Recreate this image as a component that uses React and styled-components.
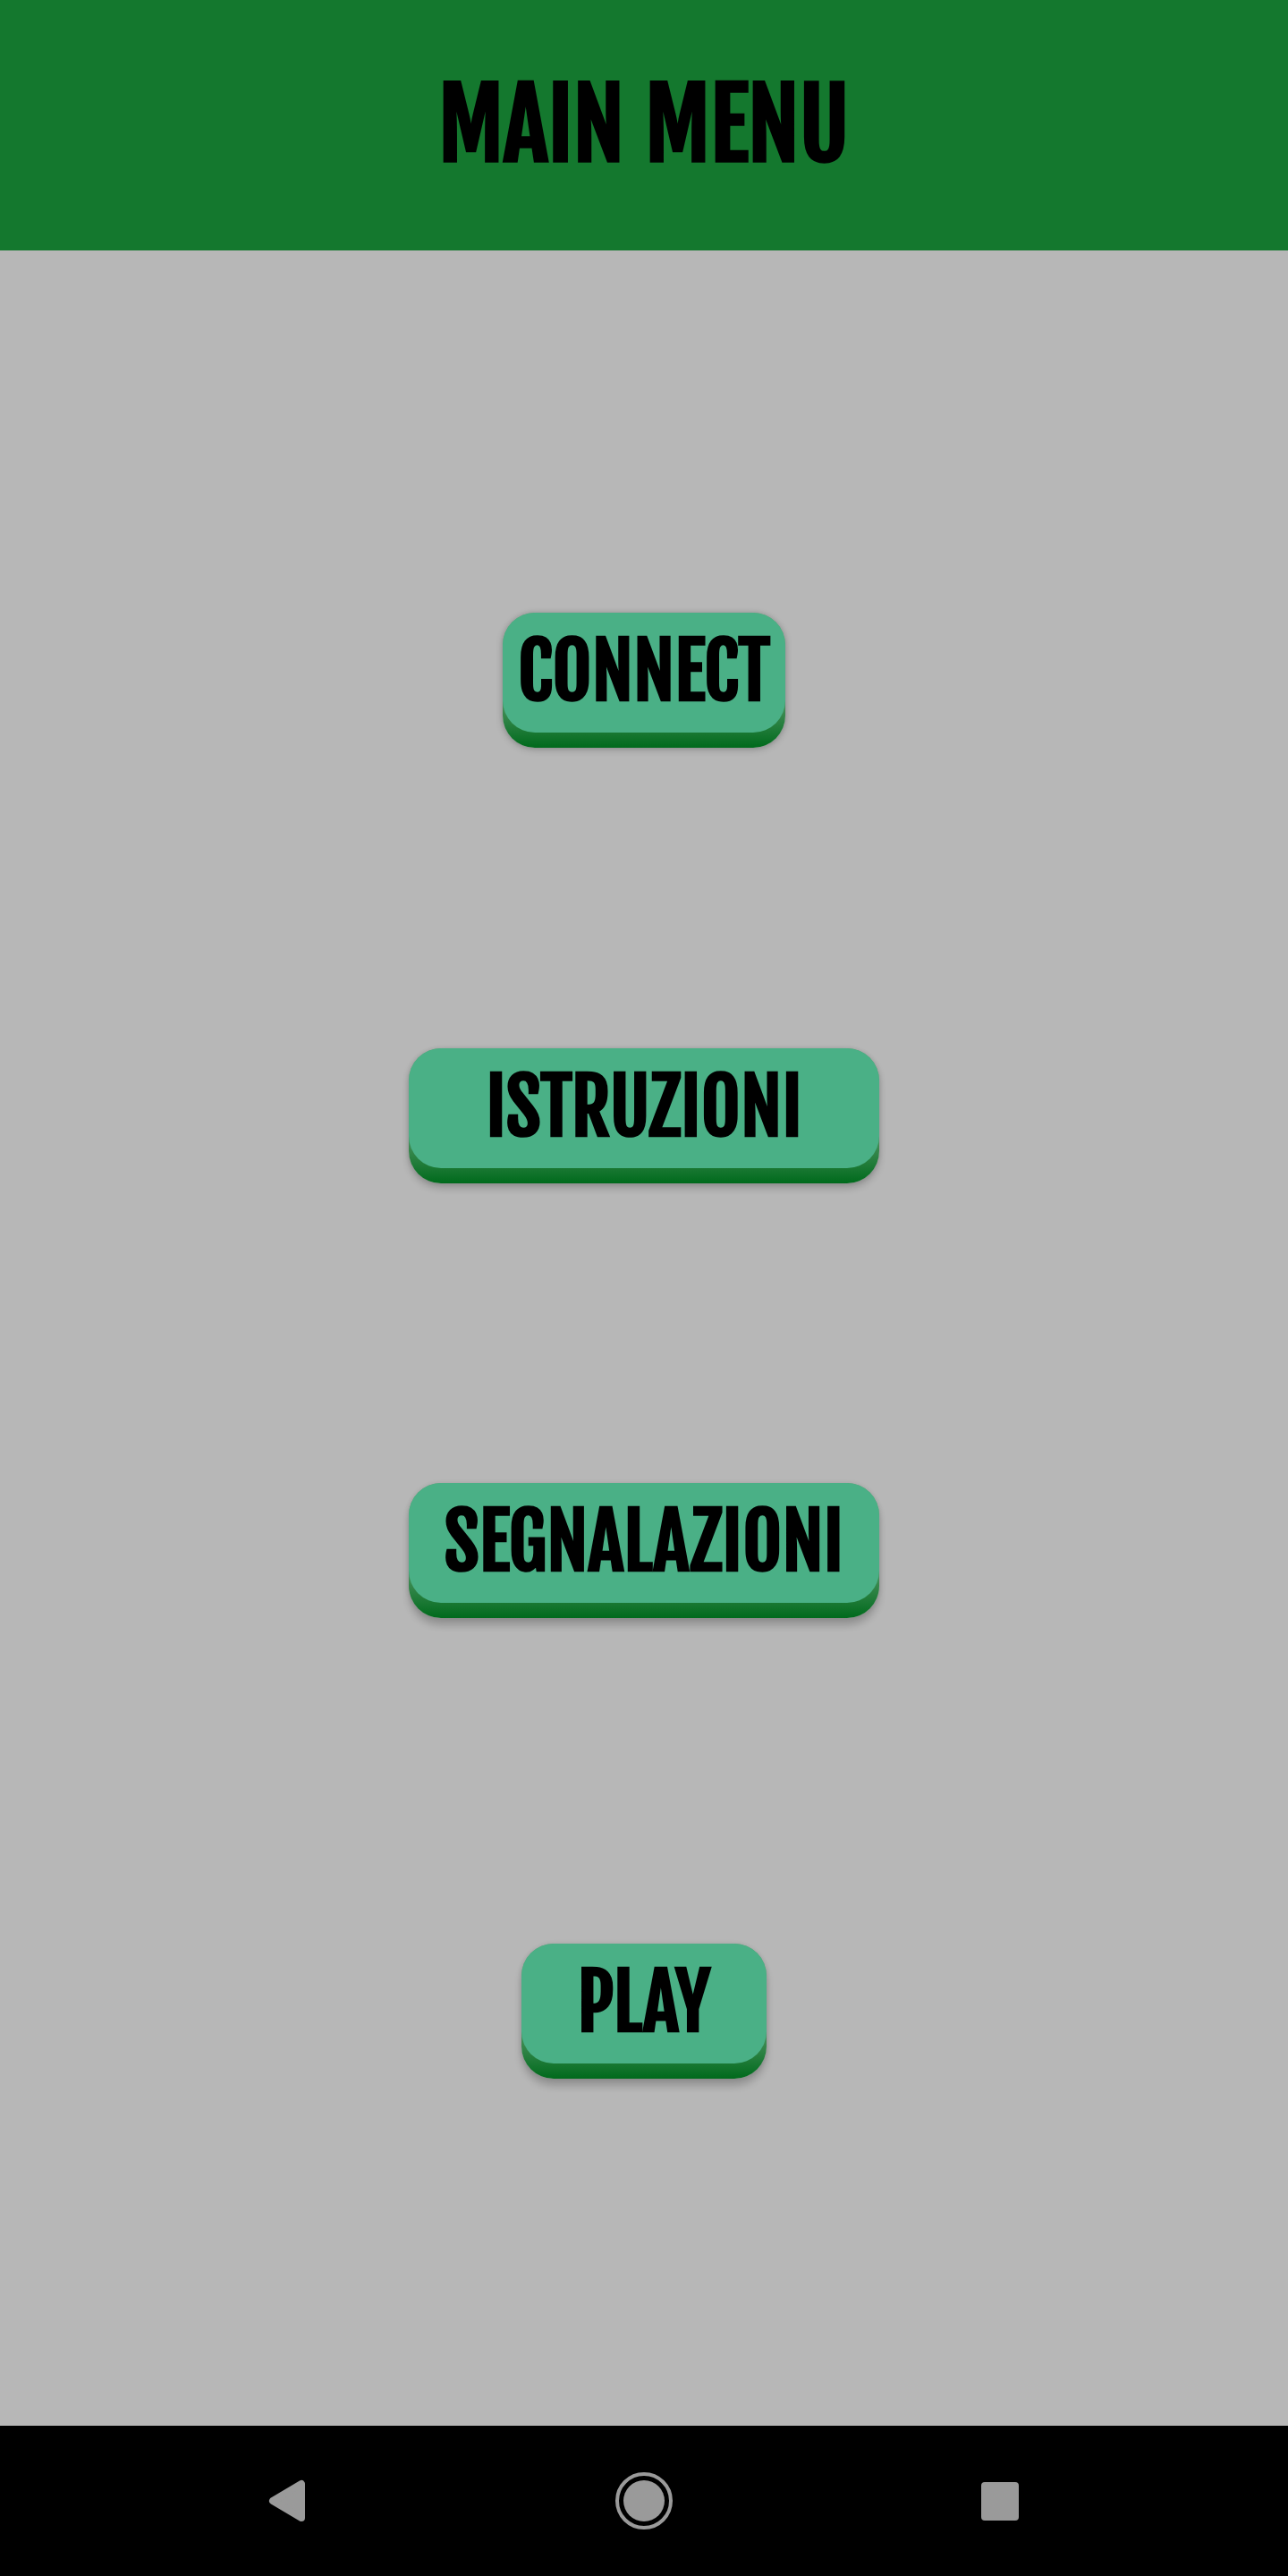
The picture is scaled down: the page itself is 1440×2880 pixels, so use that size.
import React from "react";
import styled, { createGlobalStyle } from "styled-components";

const GlobalStyle = createGlobalStyle`
  *, *::before, *::after { box-sizing: border-box; }
  body {
    margin: 0;
    background: #b7b7b7;
    font-family: "Fjalla One", Oswald, "Roboto Condensed", sans-serif;
    font-weight: 700;
    color: #000;
  }
`;

const Screen = styled.div`
  min-height: 100vh;
  display: flex;
  flex-direction: column;
`;

const Header = styled.header`
  display: flex;
  justify-content: center;
  padding: 74px 24px;
  background: #14782e;
`;

const Title = styled.h1`
  margin: 0;
  font-size: 106px;
  font-weight: 700;
  line-height: 132px;
`;

const Menu = styled.main`
  flex: 1;
  display: grid;
  grid-template-rows: 405fr auto 336fr auto 335fr auto 364fr auto 388fr;
  justify-items: center;
`;

const MenuButton = styled.button`
  grid-row: ${(p) => p.$row};
  width: ${(p) => p.$width}px;
  max-width: 100%;
  padding: 0 0 17px;
  border: 0;
  border-radius: 36px;
  background: linear-gradient(#5a9a6c 0, #5a9a6c 90px, #006a1c 100%);
  box-shadow: 0 ${(p) => p.$lift}px 8px rgba(0, 0, 0, 0.2), 0 0 5px rgba(0, 0, 0, 0.12);
  color: inherit;
  font: inherit;
  cursor: pointer;
`;

const Face = styled.span`
  display: block;
  padding: 14px 0 16px;
  border-radius: 36px;
  background: #4ab086;
  font-size: 85px;
  line-height: 104px;
`;

const NavBar = styled.nav`
  display: grid;
  grid-template-columns: repeat(3, 398px);
  justify-content: center;
  align-items: center;
  height: 168px;
  background: #000;
`;

const NavButton = styled.button`
  display: flex;
  justify-content: center;
  padding: 0;
  border: 0;
  background: none;
  color: #9a9a9a;
  cursor: pointer;
`;

const items = [
  { label: "CONNECT", width: 316, lift: 2 },
  { label: "ISTRUZIONI", width: 526, lift: 5 },
  { label: "SEGNALAZIONI", width: 526, lift: 8 },
  { label: "PLAY", width: 274, lift: 8 },
];

export default function App() {
  return (
    <Screen>
      <GlobalStyle />
      <Header>
        <Title>MAIN MENU</Title>
      </Header>
      <Menu>
        {items.map((item, i) => (
          <MenuButton key={item.label} type="button" $row={2 * i + 2} $width={item.width} $lift={item.lift}>
            <Face>{item.label}</Face>
          </MenuButton>
        ))}
      </Menu>
      <NavBar>
        <NavButton type="button" aria-label="Back">
          <svg width="64" height="64" viewBox="0 0 64 64">
            <path d="M47 13V51L15 32Z" fill="currentColor" stroke="currentColor" strokeWidth="8" strokeLinejoin="round" />
          </svg>
        </NavButton>
        <NavButton type="button" aria-label="Home">
          <svg width="64" height="64" viewBox="0 0 64 64">
            <circle cx="32" cy="32" r="30" fill="none" stroke="currentColor" strokeWidth="4" />
            <circle cx="32" cy="32" r="23" fill="currentColor" />
          </svg>
        </NavButton>
        <NavButton type="button" aria-label="Recent apps">
          <svg width="64" height="64" viewBox="0 0 64 64" fill="currentColor">
            <rect x="11" y="11" width="42" height="43" rx="4" />
          </svg>
        </NavButton>
      </NavBar>
    </Screen>
  );
}
